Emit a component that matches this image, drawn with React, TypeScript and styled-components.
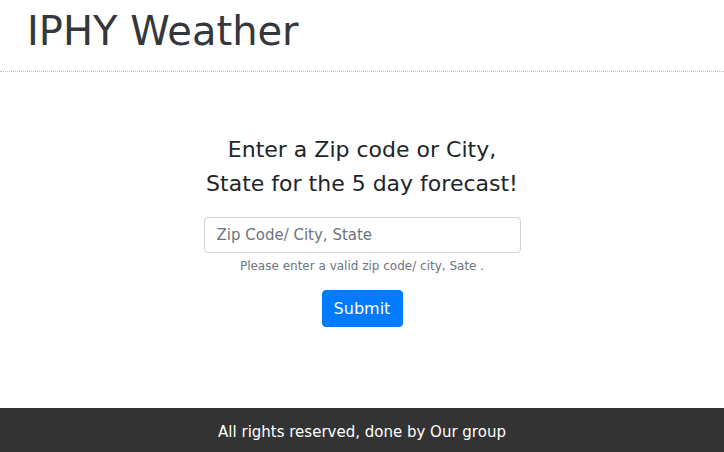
import styled, { createGlobalStyle } from "styled-components";

const GlobalStyle = createGlobalStyle`
	* {
		box-sizing: border-box;
	}
	body {
		margin: 0;
		font-family: "DejaVu Sans", "Noto Sans", sans-serif;
		color: #212529;
		background: #fff;
	}
`;

const App = () => {
	return (
		<Page>
			<GlobalStyle />
			<Header>
				<Brand>IPHY Weather</Brand>
			</Header>
			<Main>
				<Prompt>
					Enter a Zip code or City,
					<br />
					State for the 5 day forecast!
				</Prompt>
				<Form onSubmit={(e) => e.preventDefault()}>
					<Input type="text" placeholder="Zip Code/ City, State" />
					<Help>Please enter a valid zip code/ city, Sate .</Help>
					<SubmitButton type="submit">Submit</SubmitButton>
				</Form>
			</Main>
			<Footer>All rights reserved, done by Our group</Footer>
		</Page>
	);
};

export default App;

//STYLES
const Page = styled.div`
	min-height: 100vh;
	display: flex;
	flex-direction: column;
`;

const Header = styled.header`
	height: 72px;
	padding: 0 27px;
	display: flex;
	align-items: center;
	border-bottom: 1px dotted #bdbdbd;
`;

const Brand = styled.h1`
	margin: 0 0 10px;
	font-size: 40px;
	font-weight: 400;
	line-height: 1.2;
	color: #34373b;
`;

const Main = styled.main`
	flex: 1;
	display: flex;
	flex-direction: column;
	align-items: center;
	padding-top: 61px;
`;

const Prompt = styled.h2`
	margin: 0 0 16px;
	font-size: 22px;
	font-weight: 400;
	line-height: 34px;
	text-align: center;
	color: #212529;
`;

const Form = styled.form`
	display: flex;
	flex-direction: column;
	align-items: center;
`;

const Input = styled.input`
	width: 317px;
	height: 36px;
	padding: 6px 12px;
	font-family: inherit;
	font-size: 15px;
	color: #495057;
	border: 1px solid #ced4da;
	border-radius: 4px;
	outline: none;

	&::placeholder {
		color: #6c757d;
	}
`;

const Help = styled.small`
	margin-top: 4px;
	font-size: 12px;
	line-height: 18px;
	color: #6c757d;
`;

const SubmitButton = styled.button`
	margin-top: 15px;
	width: 81px;
	height: 37px;
	padding: 0;
	font-family: inherit;
	font-size: 16px;
	color: #fff;
	background: #007bff;
	border: 1px solid #007bff;
	border-radius: 4px;
	cursor: pointer;
`;

const Footer = styled.footer`
	height: 44px;
	padding-top: 3px;
	display: flex;
	align-items: center;
	justify-content: center;
	background: #333;
	color: #fff;
	font-size: 15px;
`;
